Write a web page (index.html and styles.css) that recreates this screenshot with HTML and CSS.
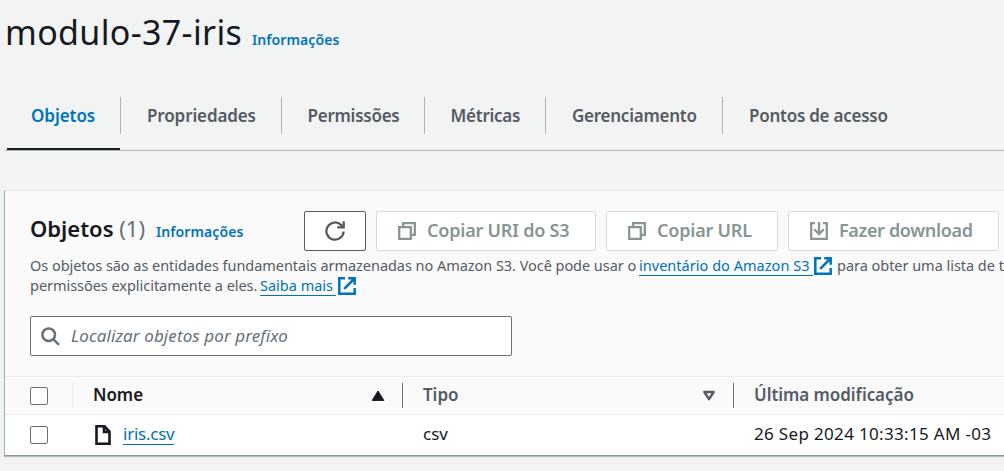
FILE: index.html
```
<!DOCTYPE html>
<html lang="pt-BR">
<head>
<meta charset="utf-8">
<title>modulo-37-iris</title>
<link rel="stylesheet" href="styles.css">
</head>
<body>
<header class="page-header">
  <h1 class="title">modulo-37-iris</h1>
  <a class="info">Informações</a>
</header>
<nav class="tabs">
  <a class="tab tab-active tab-objects">Objetos</a>
  <a class="tab tab-properties">Propriedades</a>
  <a class="tab tab-permissions">Permissões</a>
  <a class="tab tab-metrics">Métricas</a>
  <a class="tab tab-management">Gerenciamento</a>
  <a class="tab tab-access">Pontos de acesso</a>
</nav>
<main class="panel">
  <section class="panel-header">
    <div class="toolbar">
      <h2 class="subtitle">Objetos <span class="count">(1)</span></h2>
      <a class="info info-panel">Informações</a>
      <div class="actions">
        <button class="btn btn-refresh"><svg width="20" height="20" viewBox="0 0 20 20" fill="none" stroke="currentColor" stroke-width="2.3"><path d="M18.6 10.5a8.6 8.6 0 1 1-2.4-6.4l2 2.2"/><path d="M18.7 .3v6h-6.4"/></svg></button>
        <button class="btn btn-uri" disabled><svg width="18" height="18" viewBox="0 0 18 18" fill="none" stroke="currentColor" stroke-width="2.3"><path d="M1.2 5.2h11.6v11.6H1.2zM5.2 5V1.2h11.6v11.6H13"/></svg><span>Copiar URI do S3</span></button>
        <button class="btn btn-url" disabled><svg width="18" height="18" viewBox="0 0 18 18" fill="none" stroke="currentColor" stroke-width="2.3"><path d="M1.2 5.2h11.6v11.6H1.2zM5.2 5V1.2h11.6v11.6H13"/></svg><span>Copiar URL</span></button>
        <button class="btn btn-download" disabled><svg width="18" height="18" viewBox="0 0 18 18" fill="none" stroke="currentColor" stroke-width="2.3"><path d="M5 1.2H1.2v15.6h15.6V1.2H13M9 0v12M4.2 7.2 9 12l4.8-4.8"/></svg><span>Fazer download</span></button>
      </div>
    </div>
    <p class="description">
      <span class="line"><span class="intro">Os objetos são as entidades fundamentais armazenadas no Amazon S3. Você pode usar o</span><a class="link link-inventory">inventário do Amazon S3</a><svg class="external" width="18" height="18" viewBox="0 0 18 18" fill="none" stroke="currentColor" stroke-width="2.5"><path d="M7 1.3H1.3v15.4h15.4V11M10.2 1.3h6.5v6.5M16.5 1.5 6.2 11.8"/></svg><span class="rest">para obter uma lista de t</span></span>
      <span class="line"><span class="intro-second">permissões explicitamente a eles.</span><a class="link link-more">Saiba mais</a><svg class="external" width="18" height="18" viewBox="0 0 18 18" fill="none" stroke="currentColor" stroke-width="2.5"><path d="M7 1.3H1.3v15.4h15.4V11M10.2 1.3h6.5v6.5M16.5 1.5 6.2 11.8"/></svg></span>
    </p>
    <div class="search"><svg width="19" height="19" viewBox="0 0 19 19" fill="none" stroke="currentColor" stroke-width="2.5"><circle cx="7.7" cy="7.7" r="6.3"/><path d="m12.2 12.2 5.8 5.6"/></svg><span>Localizar objetos por prefixo</span></div>
  </section>
  <div class="row row-head">
    <div class="cell cell-check"><i class="checkbox"></i></div>
    <div class="cell cell-name"><span class="label">Nome</span><svg class="sort" width="14" height="12" viewBox="0 0 14 12" fill="currentColor" stroke="currentColor" stroke-linejoin="round"><path d="M7 1 1.2 10.4h11.6z"/></svg></div>
    <div class="cell cell-type"><span class="label">Tipo</span><svg class="sort" width="14" height="12" viewBox="0 0 14 12" fill="none" stroke="currentColor" stroke-width="2.4" stroke-linejoin="round"><path d="M2.3 2h9.4L7 9.2z"/></svg></div>
    <div class="cell cell-date"><span class="label">Última modificação</span></div>
  </div>
  <div class="row row-body">
    <div class="cell cell-check"><i class="checkbox"></i></div>
    <div class="cell cell-name"><svg class="file" width="16" height="20" viewBox="0 0 16 20" fill="none" stroke="currentColor" stroke-width="2.6"><path d="M1.5 1.3h8l5 5.2v12.2h-13zM9 1.3v5.6h5.5"/></svg><a class="link link-file">iris.csv</a></div>
    <div class="cell cell-type"><span class="value">csv</span></div>
    <div class="cell cell-date"><span class="value value-date">26 Sep 2024 10:33:15 AM -03</span></div>
  </div>
</main>
</body>
</html>
```
FILE: styles.css
```
* { box-sizing: border-box; }
body { margin: 0; height: 471px; overflow: hidden; background: #f2f3f3; color: #16191f; font-family: "Noto Sans", "Open Sans", sans-serif; font-size: 16px; white-space: nowrap; }
h1, h2, p { margin: 0; }
svg { display: block; flex: none; }
.page-header { display: flex; align-items: baseline; height: 97px; padding: 8px 0 0 5px; }
.title { width: 247px; font-size: 34px; line-height: 48px; font-weight: 400; letter-spacing: .35px; }
.info { color: #0073bb; font-size: 14px; font-weight: 650; letter-spacing: .1px; }
.tabs { display: flex; align-items: flex-start; height: 54px; margin-left: 5px; padding-left: 2px; border-bottom: 1px solid #aab7b8; }
.tab { height: 37px; padding-left: 26px; border-right: 1px solid #aab7b8; color: #545b64; font-size: 17px; font-weight: 650; letter-spacing: -.25px; line-height: 37px; }
.tab-active { position: relative; color: #0073bb; }
.tab-active::after { content: ""; position: absolute; left: 0; top: 51px; width: 113px; height: 2px; background: #16191f; }
.tab-objects { width: 114px; padding-left: 24px; letter-spacing: -.05px; }
.tab-properties { width: 161px; letter-spacing: -.12px; }
.tab-permissions { width: 143px; padding-left: 25.5px; }
.tab-metrics { width: 121px; padding-left: 25.5px; }
.tab-management { width: 177px; }
.tab-access { border: 0; }
.panel { height: 266px; margin: 39px 0 0 4px; border-left: 1px solid #aab7b8; border-top: 1px solid #e6e9e9; border-bottom: 1px solid #879596; box-shadow: 0 1px 1px #b8c1c1; background: #fff; }
.panel-header { height: 185px; padding: 19px 0 0 25px; background: #fafafa; overflow: hidden; }
.toolbar { display: flex; align-items: center; height: 41px; }
.subtitle { width: 126px; padding-bottom: 5px; font-size: 22px; font-weight: 600; line-height: 36px; }
.count { color: #687078; font-weight: 400; }
.info-panel { width: 148px; padding-top: 1px; }
.actions { display: flex; gap: 10px; }
.btn { display: flex; align-items: center; height: 40px; padding: 0 0 2px 21px; gap: 11px; border: 1px solid #d5dbdb; border-radius: 2px; background: #fff; color: #879596; font: 650 18px "Noto Sans", sans-serif; letter-spacing: -.2px; white-space: nowrap; }
.btn svg { margin-top: 2px; }
.btn-refresh { width: 62px; padding-left: 20px; border-color: #545b64; color: #545b64; }
.btn-uri { width: 220px; }
.btn-url { width: 172px; }
.btn-download { width: 211px; letter-spacing: -.34px; }
.description { display: grid; grid-auto-rows: 20px; margin-top: 4px; color: #545b64; font-size: 14.5px; }
.line { display: flex; align-items: center; height: 20px; }
.intro { width: 609px; letter-spacing: -.045px; }
.intro-second { width: 230px; letter-spacing: -.04px; }
.link { color: #0073bb; border-bottom: 1px solid #0073bb; line-height: 19px; }
.link-inventory, .link-more { padding-top: 1px; }
.link-inventory { width: 174px; letter-spacing: .03px; }
.link-more { width: 76px; }
.external { margin: 1px 0 0 1px; color: #0073bb; }
.link-more + .external { margin-left: 2px; }
.rest { margin-left: 5px; letter-spacing: -.03px; }
.search { display: flex; align-items: center; gap: 11px; width: 482px; height: 40px; margin-top: 21px; padding: 0 0 2px 10px; border: 1px solid #687078; border-radius: 2px; background: #fff; color: #687078; font-size: 17px; font-style: italic; letter-spacing: .1px; }
.search svg { margin-top: 2px; }
.row { display: grid; grid-template-columns: 68px 330px 331px 270px; align-items: center; }
.row-head { height: 39px; border-top: 1px solid #eaeded; border-bottom: 1px solid #eaeded; background: #fafafa; color: #545b64; font-size: 17px; font-weight: 650; letter-spacing: -.05px; }
.row-body { height: 40px; font-size: 17px; }
.cell { display: flex; align-items: center; height: 25px; }
.cell-check { padding-left: 25px; }
.cell-name, .cell-type, .cell-date { padding-left: 20px; }
.row-head .cell-check { border-right: 1px solid #eaeded; }
.row-head .cell-name, .row-head .cell-type { padding-right: 17px; border-right: 1px solid #687078; }
.row-head .cell-name { color: #16191f; }
.checkbox { width: 18px; height: 18px; border: 1px solid #687078; border-radius: 2px; background: #fff; }
.label { padding-bottom: 2px; }
.value { padding-bottom: 4px; }
.value-date { letter-spacing: .33px; }
.sort { margin-left: auto; }
.file { margin-left: 2px; }
.link-file { margin: 0 0 2px 12px; line-height: 20px; letter-spacing: -.25px; }
```
